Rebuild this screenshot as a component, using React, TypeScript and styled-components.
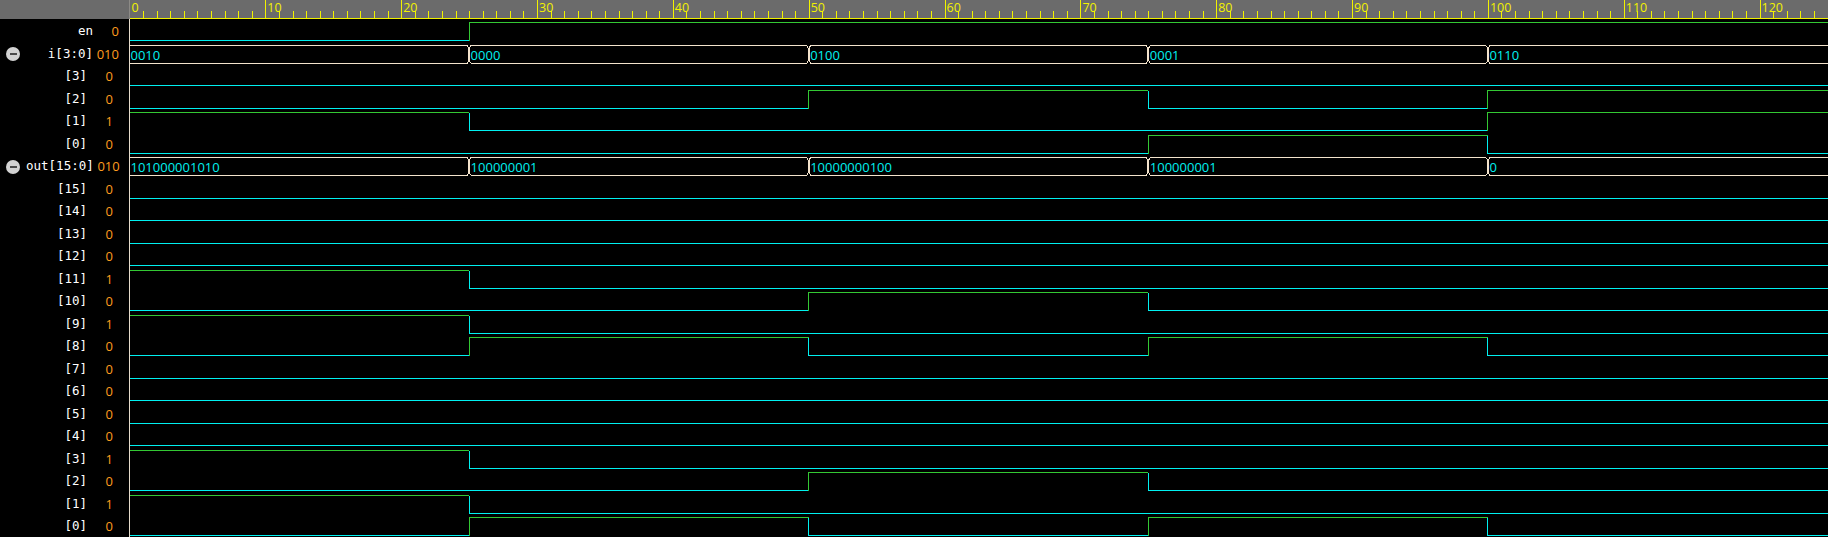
import styled, { createGlobalStyle } from "styled-components";

// wave geometry, px
const ROW_H = 22.5;
const WAVE_W = 1698;
const END_T = 125;
const PX = WAVE_W / END_T;
const EDGES = [0, 25, 50, 75, 100];
const HIGH_Y = 3.5;
const LOW_Y = 21.5;
const BUS_TOP = 3.5;
const BUS_BOT = 21.5;
const TEXT_Y = 17.5;

const CYAN = "#00f0f0";
const GREEN = "#33c833";
const BUS = "#f3e3cc";
const YELLOW = "#f2f200";

const xAt = (t: number) => t * PX - 0.5;

const iVals = ["0010", "0000", "0100", "0001", "0110"];
const outVals = ["101000001010", "100000001", "10000000100", "100000001", "0"];

const bitsOf = (vals: string[], bit: number) =>
  vals.map((v) => (parseInt(v, 2) >> bit) & 1);

interface Signal {
  name: string;
  value: string;
  child?: boolean;
  bus?: string[];
  bits?: number[];
}

const signals: Signal[] = [
  { name: "en", value: "0", bits: [0, 1, 1, 1, 1] },
  { name: "i[3:0]", value: "010", bus: iVals },
  ...[3, 2, 1, 0].map((b) => ({
    name: `[${b}]`,
    value: String(bitsOf(iVals, b)[0]),
    child: true,
    bits: bitsOf(iVals, b),
  })),
  { name: "out[15:0]", value: "010", bus: outVals },
  ...Array.from({ length: 16 }, (_, k) => 15 - k).map((b) => ({
    name: `[${b}]`,
    value: String(bitsOf(outVals, b)[0]),
    child: true,
    bits: bitsOf(outVals, b),
  })),
];

function Ruler() {
  const ticks = [];
  for (let t = 1; t <= END_T; t++) {
    const x = Math.round(xAt(t)) + 0.5;
    if (t % 10 === 0) {
      ticks.push(<line key={t} x1={x} x2={x} y1={0} y2={18} stroke={YELLOW} />);
    } else {
      ticks.push(<line key={t} x1={x} x2={x} y1={11} y2={18} stroke={YELLOW} />);
    }
  }
  const labels = [];
  for (let t = 0; t <= 120; t += 10) {
    labels.push(
      <RulerText key={t} x={xAt(t) + 2} y={12}>
        {t}
      </RulerText>
    );
  }
  return (
    <svg width={WAVE_W} height={19} shapeRendering="crispEdges">
      <rect width={WAVE_W} height={19} fill="#6b6b6b" />
      {ticks}
      <rect y={17.5} width={WAVE_W} height={1.5} fill={YELLOW} />
      {labels}
    </svg>
  );
}

function BitWave({ bits }: { bits: number[] }) {
  const yOf = (b: number) => (b ? HIGH_Y : LOW_Y);
  return (
    <svg width={WAVE_W} height={ROW_H} shapeRendering="crispEdges">
      {bits.map((b, k) => {
        const x0 = k === 0 ? 0 : xAt(EDGES[k]);
        const x1 = k === bits.length - 1 ? WAVE_W : xAt(EDGES[k + 1]);
        const prev = k > 0 ? bits[k - 1] : b;
        const d =
          prev !== b
            ? `M${x0},${yOf(prev)} V${yOf(b)} H${x1}`
            : `M${x0},${yOf(b)} H${x1}`;
        return <path key={k} d={d} stroke={b ? GREEN : CYAN} fill="none" />;
      })}
    </svg>
  );
}

function BusWave({ labels }: { labels: string[] }) {
  return (
    <svg width={WAVE_W} height={ROW_H} shapeRendering="crispEdges">
      {labels.map((label, k) => {
        const first = k === 0;
        const last = k === labels.length - 1;
        const x0 = first ? 0 : xAt(EDGES[k]);
        const x1 = last ? WAVE_W : xAt(EDGES[k + 1]);
        const a = first ? 0 : x0 + 2;
        const b = last ? WAVE_W : x1 - 2;
        let d = `M${a},${BUS_TOP} H${b} M${a},${BUS_BOT} H${b}`;
        if (!first)
          d += ` M${x0 + 2},${BUS_TOP} L${x0 + 0.5},${BUS_TOP + 2.5} V${BUS_BOT - 2.5} L${x0 + 2},${BUS_BOT}`;
        if (!last)
          d += ` M${x1 - 2},${BUS_TOP} L${x1 - 0.5},${BUS_TOP + 2.5} V${BUS_BOT - 2.5} L${x1 - 2},${BUS_BOT}`;
        return (
          <g key={k}>
            <path d={d} stroke={BUS} fill="none" />
            <BusText x={first ? 0.5 : x0 + 1.5} y={TEXT_Y}>
              {label}
            </BusText>
          </g>
        );
      })}
    </svg>
  );
}

export default function App() {
  return (
    <>
      <GlobalStyle />
      <Screen>
        <Header>
          <HeaderName />
          <Ruler />
        </Header>
        {signals.map((s, k) => (
          <Row key={k}>
            <NameCell $child={s.child}>
              <span>{s.bus && <Collapse />}</span>
              <Name>{s.name}</Name>
              <Value>{s.value}</Value>
            </NameCell>
            <WaveCell>
              {s.bus ? <BusWave labels={s.bus} /> : <BitWave bits={s.bits!} />}
            </WaveCell>
          </Row>
        ))}
      </Screen>
    </>
  );
}

const GlobalStyle = createGlobalStyle`
  body {
    margin: 0;
    background: #000;
    overflow: hidden;
  }
`;

const Screen = styled.div`
  width: 1828px;
  height: 537px;
  display: flex;
  flex-direction: column;
  background: #000;
  overflow: hidden;
`;

const Header = styled.div`
  display: flex;
  height: 19px;
  flex: none;

  svg {
    display: block;
  }
`;

const HeaderName = styled.div`
  width: 130px;
  flex: none;
  box-sizing: border-box;
  background: #6b6b6b;
  border-right: 1px solid #8c8a86;
`;

const Row = styled.div`
  display: flex;
  height: ${ROW_H}px;
  flex: none;
`;

const NameCell = styled.div<{ $child?: boolean }>`
  width: 130px;
  flex: none;
  box-sizing: border-box;
  border-right: 1px solid #e6dccb;
  display: grid;
  grid-template-columns: 26px 1fr 26px;
  align-items: center;
  padding: 2px ${(p) => (p.$child ? 16 : 10)}px 0 0;
  font-family: "DejaVu Sans Mono", "Liberation Mono", monospace;
  font-size: 12.5px;
  line-height: 20.5px;
`;

const Name = styled.span`
  color: #ffffff;
  text-align: right;
  white-space: nowrap;
`;

const Value = styled.span`
  color: #ff9c1e;
  text-align: right;
  font-family: "Open Sans", sans-serif;
  font-size: 13px;
`;

const Collapse = styled.span`
  display: flex;
  align-items: center;
  justify-content: center;
  width: 14px;
  height: 14px;
  margin-left: 6px;
  margin-top: 1px;
  border-radius: 50%;
  background: #d2d2d2;

  &::after {
    content: "";
    width: 7px;
    height: 2px;
    background: #4a4a4a;
  }
`;

const WaveCell = styled.div`
  flex: 1;
  overflow: hidden;

  svg {
    display: block;
  }
`;

const BusText = styled.text`
  fill: ${CYAN};
  font-family: "Open Sans", sans-serif;
  font-size: 13px;
`;

const RulerText = styled.text`
  fill: ${YELLOW};
  font-family: "Open Sans", sans-serif;
  font-size: 12.5px;
`;
